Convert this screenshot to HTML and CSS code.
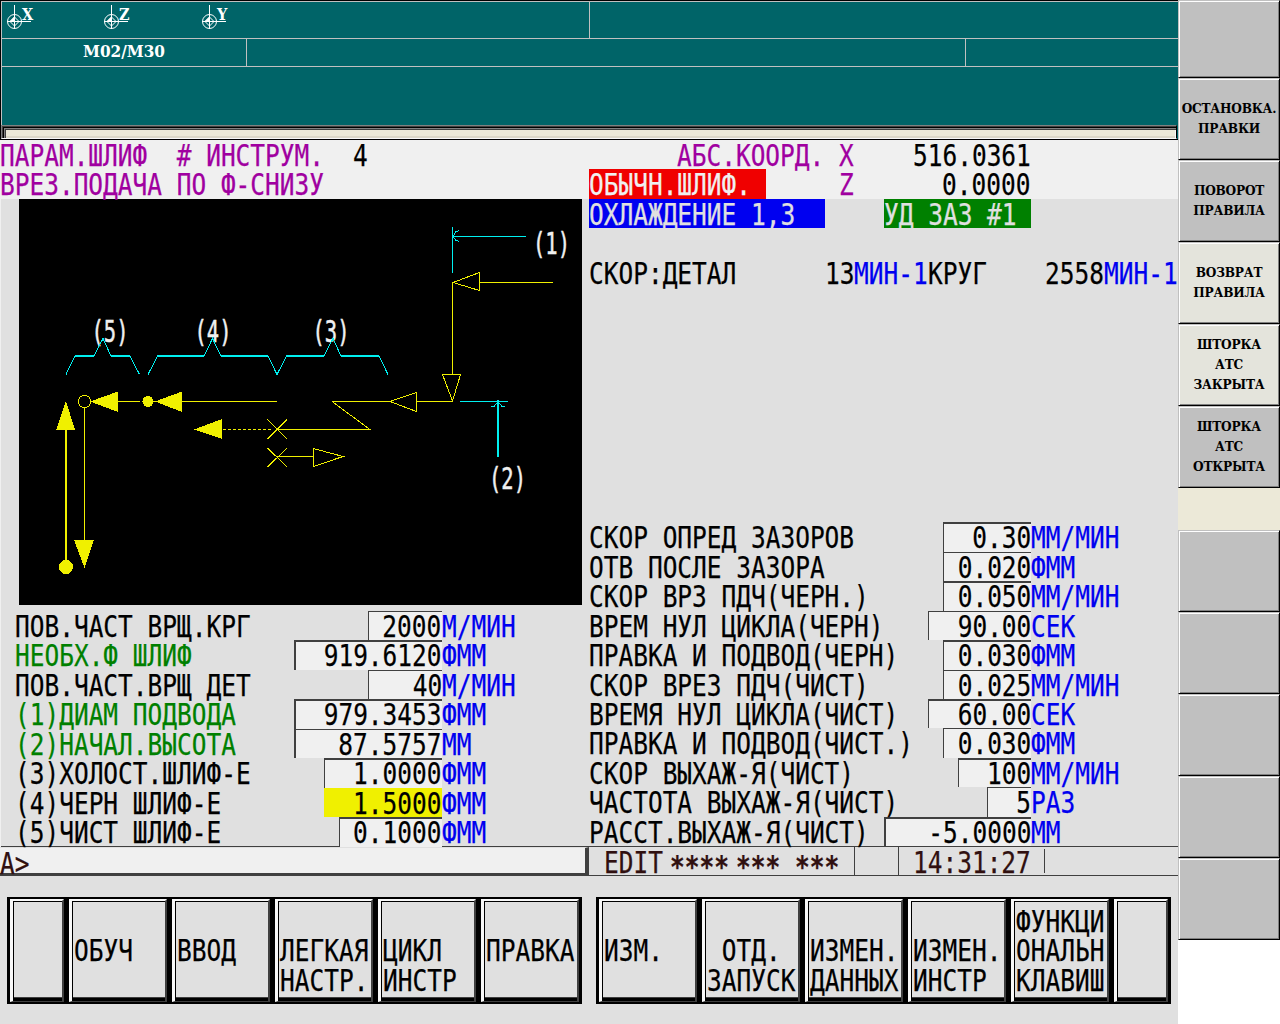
FILE: index.html
```html
<!DOCTYPE html>
<html lang="ru">
<head>
<meta charset="utf-8">
<title>Параметры шлифования</title>
<link rel="stylesheet" href="styles.css">
</head>
<body>
<div class="app">
  <div class="main">
    <header class="machine">
      <div class="m-row axes">
        <svg class="axis" width="97" height="36" viewBox="0 0 97 36"><use href="#mark"/><text x="20" y="18">X</text></svg>
        <svg class="axis" width="98" height="36" viewBox="0 0 98 36"><use href="#mark"/><text x="20" y="18">Z</text></svg>
        <svg class="axis" width="98" height="36" viewBox="0 0 98 36"><use href="#mark"/><text x="20" y="18">Y</text></svg>
        <span class="half"></span>
      </div>
      <div class="m-row codes">
        <div class="code">M02/M30</div>
        <div class="code-mid"></div>
      </div>
      <div class="m-row blank"></div>
      <div class="slot"></div>
    </header>

    <section class="cnc">
      <div class="titles">
        <div class="half-col purple">
          <div class="row"><span class="c w24"><i>ПАРАМ.ШЛИФ  # ИНСТРУМ.</i></span><span class="c w4 black"><i>4</i></span></div>
          <div class="row"><span class="c"><i>ВРЕЗ.ПОДАЧА ПО Ф-СНИЗУ</i></span></div>
        </div>
        <div class="half-col">
          <div class="row"><span class="w6"></span><span class="c w11 purple"><i>АБС.КООРД.</i></span><span class="c w5 purple"><i>X</i></span><span class="c w8"><i>516.0361</i></span></div>
          <div class="row"><span class="c w12 tag red"><i>ОБЫЧН.ШЛИФ.</i></span><span class="w5"></span><span class="c w7 purple"><i>Z</i></span><span class="c w6"><i>0.0000</i></span></div>
        </div>
      </div>

      <div class="body">
        <div class="left-col">
          <svg class="diagram" width="563" height="406" viewBox="19 199 563 406">
            <g class="num">
              <text x="91.500" y="341.5" textLength="37" lengthAdjust="spacingAndGlyphs">(5)</text>
              <text x="194.500" y="341.5" textLength="37" lengthAdjust="spacingAndGlyphs">(4)</text>
              <text x="312.500" y="341.5" textLength="37" lengthAdjust="spacingAndGlyphs">(3)</text>
              <text x="533" y="253.5" textLength="37" lengthAdjust="spacingAndGlyphs">(1)</text>
              <text x="489" y="488.5" textLength="37" lengthAdjust="spacingAndGlyphs">(2)</text>
            </g>
            <g class="cyan">
              <path d="M66 374.500L75 356L94 356L103 338.500L111 356L130 356L139.500 374.500"/>
              <path d="M148 374.500L157.500 356L204 356L212.500 338.500L221 356L268 356L277 374.500L286.500 356L324 356L333 338.500L341 356L379 356L388 374.500"/>
              <path class="thick" d="M75 356H94M111 356H130M157 356H204M221 356H268M286 356H324M341 356H379"/>
              <path d="M452.500 227V273M453 236.500H526M459 230.500L455.500 232L453 236.500L455.500 240L459 241.500"/>
              <path d="M460 401.500H508M491 406.500H494L498 401.500L502 406.500H505"/>
              <path class="thick" d="M498 400V457"/>
            </g>
            <g class="yellow">
              <path d="M118 401.500H140M142 401.500H277M332 401.500H390M416 401.500H453M332 401.500L370 429.500H277M277 456.500H313M479 282.500H553M452.500 282V374M84.500 408V541"/>
              <path class="dash" d="M223 429.500H272"/>
              <path class="thick" d="M66 425V567"/>
              <path d="M267.500 419.500L287 439M287 419.500L267.500 439M267.500 448L287 467M287 448L267.500 467"/>
              <path d="M313.500 448.500V466.500L343 456.500ZM453 282.500L479.500 272.500V290.500ZM442.500 374.500H460.500L452.500 401ZM390 401.500L416.500 392.500V411.500Z"/>
              <circle cx="84.500" cy="401.500" r="6.200"/>
              <path class="solid" d="M90 401.500L118 391.500V412ZM155 401.500L182 391.500V412ZM194 429.500L222 419V439ZM66 401L56 430H75ZM74 540H94L84.500 568Z"/>
              <circle class="solid" cx="148" cy="401.500" r="5.500"/>
              <circle class="solid" cx="66" cy="567" r="7"/>
            </g>
          </svg>
          <div class="params">
            <div class="row"><span class="c w24"><i>ПОВ.ЧАСТ ВРЩ.КРГ</i></span><span class="c val w5"><i>2000</i></span><span class="c unit"><i>М/МИН</i></span></div>
            <div class="row"><span class="c w19 green"><i>НЕОБХ.Ф ШЛИФ</i></span><span class="c val deep w10"><i>919.6120</i></span><span class="c unit"><i>ФММ</i></span></div>
            <div class="row"><span class="c w24"><i>ПОВ.ЧАСТ.ВРЩ ДЕТ</i></span><span class="c val w5"><i>40</i></span><span class="c unit"><i>М/МИН</i></span></div>
            <div class="row"><span class="c w19 green"><i>(1)ДИАМ ПОДВОДА</i></span><span class="c val deep w10"><i>979.3453</i></span><span class="c unit"><i>ФММ</i></span></div>
            <div class="row"><span class="c w19 green"><i>(2)НАЧАЛ.ВЫСОТА</i></span><span class="c val wide w10"><i>87.5757</i></span><span class="c unit"><i>ММ</i></span></div>
            <div class="row"><span class="c w21"><i>(3)ХОЛОСТ.ШЛИФ-Е</i></span><span class="c val tall w8"><i>1.0000</i></span><span class="c unit"><i>ФММ</i></span></div>
            <div class="row"><span class="c w21"><i>(4)ЧЕРН ШЛИФ-Е</i></span><span class="c val active w8"><i>1.5000</i></span><span class="c unit"><i>ФММ</i></span></div>
            <div class="row"><span class="c w22"><i>(5)ЧИСТ ШЛИФ-Е</i></span><span class="c val tall w7"><i>0.1000</i></span><span class="c unit"><i>ФММ</i></span></div>
          </div>
        </div>

        <div class="right-col">
          <div class="row"><span class="c w16 tag blue"><i>ОХЛАЖДЕНИЕ 1,3</i></span><span class="w4"></span><span class="c w10 tag lime"><i>УД ЗАЗ #1</i></span></div>
          <div class="row"></div>
          <div class="row speeds"><span class="c w16"><i>СКОР:ДЕТАЛ</i></span><span class="c w2"><i>13</i></span><span class="c w5 unit"><i>МИН-1</i></span><span class="c w8"><i>КРУГ</i></span><span class="c w4"><i>2558</i></span><span class="c w5 unit"><i>МИН-1</i></span></div>
          <div class="row"><span class="c w24"><i>СКОР ОПРЕД ЗАЗОРОВ</i></span><span class="c val tall w6"><i>0.30</i></span><span class="c unit"><i>ММ/МИН</i></span></div>
          <div class="row"><span class="c w24"><i>ОТВ ПОСЛЕ ЗАЗОРА</i></span><span class="c val w6"><i>0.020</i></span><span class="c unit"><i>ФММ</i></span></div>
          <div class="row"><span class="c w24"><i>СКОР ВРЗ ПДЧ(ЧЕРН.)</i></span><span class="c val tall w6"><i>0.050</i></span><span class="c unit"><i>ММ/МИН</i></span></div>
          <div class="row"><span class="c w23"><i>ВРЕМ НУЛ ЦИКЛА(ЧЕРН)</i></span><span class="c val w7"><i>90.00</i></span><span class="c unit"><i>СЕК</i></span></div>
          <div class="row"><span class="c w24"><i>ПРАВКА И ПОДВОД(ЧЕРН)</i></span><span class="c val tall w6"><i>0.030</i></span><span class="c unit"><i>ФММ</i></span></div>
          <div class="row"><span class="c w24"><i>СКОР ВРЕЗ ПДЧ(ЧИСТ)</i></span><span class="c val w6"><i>0.025</i></span><span class="c unit"><i>ММ/МИН</i></span></div>
          <div class="row"><span class="c w23"><i>ВРЕМЯ НУЛ ЦИКЛА(ЧИСТ)</i></span><span class="c val tall w7"><i>60.00</i></span><span class="c unit"><i>СЕК</i></span></div>
          <div class="row"><span class="c w24"><i>ПРАВКА И ПОДВОД(ЧИСТ.)</i></span><span class="c val w6"><i>0.030</i></span><span class="c unit"><i>ФММ</i></span></div>
          <div class="row"><span class="c w25"><i>СКОР ВЫХАЖ-Я(ЧИСТ)</i></span><span class="c val tall w5"><i>100</i></span><span class="c unit"><i>ММ/МИН</i></span></div>
          <div class="row"><span class="c w27"><i>ЧАСТОТА ВЫХАЖ-Я(ЧИСТ)</i></span><span class="c val w3"><i>5</i></span><span class="c unit"><i>РАЗ</i></span></div>
          <div class="row"><span class="c w20"><i>РАССТ.ВЫХАЖ-Я(ЧИСТ)</i></span><span class="c val deep w10"><i>-5.0000</i></span><span class="c unit"><i>ММ</i></span></div>
        </div>
      </div>

      <div class="status">
        <div class="prompt"><span class="c"><i>A&gt;</i></span></div>
        <div class="mode"><span class="c edit"><i>EDIT</i></span><span class="c star s4"><i>****</i></span><span class="c star s3"><i>***</i></span><span class="c star s3"><i>***</i></span></div>
        <div class="alarm"></div>
        <div class="clock"><span class="c"><i>14:31:27</i></span></div>
      </div>
    </section>

    <nav class="softkeys">
      <div class="keys">
        <div class="key slim"></div>
        <div class="key"><p></p><p class="c"><i>ОБУЧ</i></p></div>
        <div class="key"><p></p><p class="c"><i>ВВОД</i></p></div>
        <div class="key"><p></p><p class="c"><i>ЛЕГКАЯ</i></p><p class="c"><i>НАСТР.</i></p></div>
        <div class="key"><p></p><p class="c"><i>ЦИКЛ</i></p><p class="c"><i>ИНСТР</i></p></div>
        <div class="key"><p></p><p class="c"><i>ПРАВКА</i></p></div>
      </div>
      <div class="keys">
        <div class="key"><p></p><p class="c"><i>ИЗМ.</i></p></div>
        <div class="key"><p></p><p class="c"><i> ОТД.</i></p><p class="c"><i>ЗАПУСК</i></p></div>
        <div class="key"><p></p><p class="c"><i>ИЗМЕН.</i></p><p class="c"><i>ДАННЫХ</i></p></div>
        <div class="key"><p></p><p class="c"><i>ИЗМЕН.</i></p><p class="c"><i>ИНСТР</i></p></div>
        <div class="key"><p class="c"><i>ФУНКЦИ</i></p><p class="c"><i>ОНАЛЬН</i></p><p class="c"><i>КЛАВИШ</i></p></div>
        <div class="key slim"></div>
      </div>
    </nav>
  </div>

  <aside class="side">
    <button class="sb first"></button>
    <button class="sb">ОСТАНОВКА.<br>ПРАВКИ</button>
    <button class="sb">ПОВОРОТ<br>ПРАВИЛА</button>
    <button class="sb lit">ВОЗВРАТ<br>ПРАВИЛА</button>
    <button class="sb lit">ШТОРКА<br>АТС<br>ЗАКРЫТА</button>
    <button class="sb">ШТОРКА<br>АТС<br>ОТКРЫТА</button>
    <div class="gap"></div>
    <button class="sb"></button>
    <button class="sb"></button>
    <button class="sb"></button>
    <button class="sb"></button>
    <button class="sb"></button>
  </aside>
</div>

<svg width="0" height="0" class="defs">
  <defs>
    <g id="mark" fill="none" stroke="#fff">
      <path d="M12.500 3V27M5 19.500H29"/>
      <circle cx="12.500" cy="19.500" r="7"/>
      <path d="M12.500 15L17 19.500L12.500 24L8 19.500Z"/>
      <path fill="#fff" d="M12.500 15V19.500H8Z"/>
    </g>
  </defs>
</svg>
</body>
</html>
```
FILE: styles.css
```css
:root {
  --cw: 14.725px;
  --ch: 29.45px;
}
* { box-sizing: border-box; }
body { margin: 0; background: #fff; overflow: hidden; }
.defs { position: absolute; }
.app { display: flex; width: 1280px; height: 1024px; }
.main { width: 1178px; height: 1024px; background: #e0e0e0; display: flex; flex-direction: column; flex: none; }

/* machine header */
.machine { height: 140px; background: #006468; border-top: 1px solid #000; border-left: 1px solid #000; border-bottom: 1px solid #000; display: flex; flex-direction: column; flex: none; }
.m-row { border-left: 1px solid #c0c0c0; display: flex; }
.axes { height: 38px; border-top: 1px solid #c0c0c0; border-bottom: 1px solid #c0c0c0; }
.axis { display: block; flex: none; }
.axis text { font: bold 16px "DejaVu Serif Condensed", "DejaVu Serif", serif; fill: #fff; }
.half { width: 295px; border-right: 1px solid #c0c0c0; }
.codes { height: 28px; border-bottom: 1px solid #c0c0c0; }
.code { width: 245px; border-right: 1px solid #c0c0c0; text-align: center; color: #fff; font: bold 17px/25px "DejaVu Serif Condensed", "DejaVu Serif", serif; font-stretch: condensed; }
.code-mid { width: 719px; border-right: 1px solid #c0c0c0; }
.blank { height: 58px; }
.slot { height: 14px; margin-right: 1px; background: #ece9d8; border: solid; border-width: 1px 1px 1px 1px; border-color: #808080 #000 #f8f8f8 #808080; box-shadow: inset 1px 1px #404040, inset 2px 2px #000, inset 3px 3px #808080, inset 4px 4px #404040, inset -1px 0 #f8f8f8, inset 0 -2px #dcd8c8; }

/* character-cell text: glyphs are narrowed to the cell width */
.row { height: var(--ch); display: flex; }
.row > * { flex: none; }
.c { display: block; font: 30px/31px "DejaVu Sans Mono", monospace; white-space: pre; margin: 0; height: var(--ch); -webkit-text-stroke: .25px; }
.c i { display: block; width: max-content; font-style: normal; transform: scaleX(.8153); transform-origin: 0 0; }
.w2 { width: calc(var(--cw) * 2); }
.w3 { width: calc(var(--cw) * 3); }
.w4 { width: calc(var(--cw) * 4); }
.w5 { width: calc(var(--cw) * 5); }
.w6 { width: calc(var(--cw) * 6); }
.w7 { width: calc(var(--cw) * 7); }
.w8 { width: calc(var(--cw) * 8); }
.w10 { width: calc(var(--cw) * 10); }
.w11 { width: calc(var(--cw) * 11); }
.w12 { width: calc(var(--cw) * 12); }
.w16 { width: calc(var(--cw) * 16); }
.w19 { width: calc(var(--cw) * 19); }
.w20 { width: calc(var(--cw) * 20); }
.w21 { width: calc(var(--cw) * 21); }
.w22 { width: calc(var(--cw) * 22); }
.w23 { width: calc(var(--cw) * 23); }
.w24 { width: calc(var(--cw) * 24); }
.w25 { width: calc(var(--cw) * 25); }
.w27 { width: calc(var(--cw) * 27); }
.purple { color: #a000a0; }
.black { color: #000; }
.green { color: #008000; }
.unit { color: #0000f0; width: calc(var(--cw) * 5); }
.tag { color: #f0f0f0; }
.red { background: #f00000; }
.blue { background: #0000f0; color: #e0e0e0; }
.lime { background: #008000; color: #e0e0e0; margin-left: .7px; }

.cnc { color: #000; flex: none; }
.titles { display: flex; height: 59px; background: #f0f0f0; }
.half-col { width: 589px; }
.body { display: flex; height: 648px; }
.left-col { width: 589px; border-left: 1px solid #f0f0f0; }
.diagram { display: block; margin-left: 18px; background: #000; shape-rendering: crispEdges; }
.diagram text { font: 30px "DejaVu Sans Mono", monospace; fill: #f0f0f0; stroke: #f0f0f0; stroke-width: .5px; }
.cyan { stroke: #00f0f0; fill: none; }
.yellow { stroke: #f0f000; fill: none; }
.solid { fill: #f0f000; stroke: none; }
.thick { stroke-width: 2; }
.dash { stroke-dasharray: 3 2; }
.params { padding: 6px 0 0 13.725px; }

.val { background: #f0f0f0; border-top: 1px solid #404040; border-left: 1px solid #404040; line-height: 29px; display: flex; justify-content: flex-end; }
.val i { transform-origin: 100% 0; }
.val.tall { border-top-width: 2px; line-height: 27px; }
.val.deep { border-top-width: 2px; border-left-width: 2px; line-height: 27px; }
.val.wide { border-left-width: 2px; }
.val.active { background: #f0f000; border: 0; line-height: 31px; }
.right-col .val { margin-left: .7px; }
.speeds { margin-bottom: 235px; }

/* status line */
.status { display: flex; height: 29px; margin-top: -1px; border-top: 1px solid #404040; color: #301010; }
.status .c { height: 27px; line-height: 31px; }
.prompt { width: 589px; background: #f0f0f0; border-top: 1px solid #e0e0e0; border-right: 4px solid #404040; border-bottom: 3px solid #404040; height: 29px; }
.mode { width: 266px; display: flex; padding-left: 14.725px; border-right: 1px solid #404040; border-bottom: 1px solid #404040; height: 29px; }
.edit { width: 66px; }
.star i { font-weight: bold; position: relative; top: 4px; }
.s4 { width: 66.300px; }
.s3 { width: 58.900px; }
.alarm { width: 44px; border-right: 1px solid #404040; border-bottom: 1px solid #404040; height: 29px; }
.clock { flex: 1; padding-left: 14px; border-bottom: 1px solid #404040; height: 29px; background: linear-gradient(#404040, #404040) 145px 2px / 1px 24px no-repeat; }

/* softkeys */
.softkeys { display: flex; justify-content: space-between; padding: 22px 7px 0; }
.keys { display: flex; gap: 5px; height: 107px; width: 575px; padding: 2px 3px; background: #000; flex: none; }
.key { flex: none; width: 98px; height: 103px; background: #e0e0e0; border: solid; border-width: 2px 2px 1px 3px; border-color: #f8f8f8 #404040 #404040 #f8f8f8; box-shadow: inset 1px 1px #000, inset 0 -3px #000, inset 0 -4px #404040; padding: 5px 0 0 1.700px; }
.key p { margin: 0; height: var(--ch); }
.key.slim { width: 54px; }

/* side panel */
.side { width: 102px; display: flex; flex-direction: column; }
.sb { height: 82px; flex: none; padding: 0 0 2px; color: #000; background: #c0c0c0; border: 1px solid; border-color: #c0c0c0 #000 #000 #c0c0c0; box-shadow: inset 1px 1px #fff, inset -1px -1px #808080; border-radius: 0; font: bold 13.5px/20px "DejaVu Serif Condensed", "DejaVu Serif", serif; font-stretch: condensed; letter-spacing: -.2px; overflow: hidden; white-space: nowrap; }
.first { height: 78px; }
.lit { background: #e4e4dc; }
.gap { height: 42px; flex: none; background: #ece9d8; }
```
